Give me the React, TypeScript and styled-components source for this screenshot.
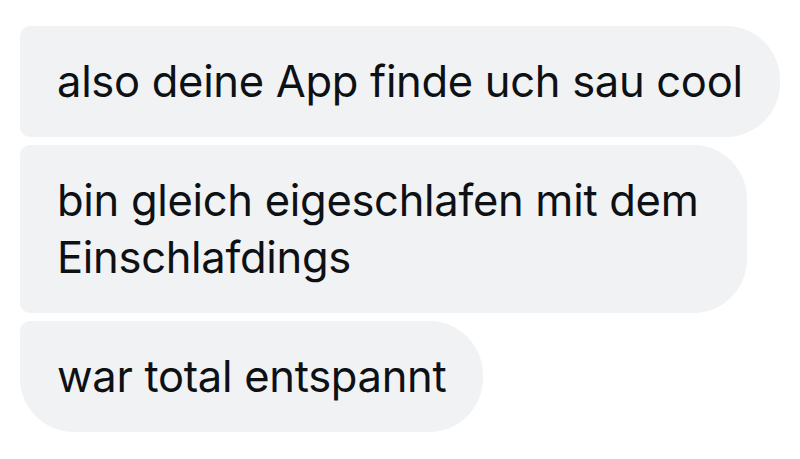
import React from 'react';
import styled, { createGlobalStyle } from 'styled-components';

const GlobalStyle = createGlobalStyle`
  html, body {
    margin: 0;
    padding: 0;
    background: #ffffff;
  }
  body {
    font-family: Inter, "Noto Sans", "Liberation Sans", sans-serif;
    -webkit-font-smoothing: antialiased;
  }
`;

type Position = 'first' | 'middle' | 'last';

const Thread = styled.div`
  display: flex;
  flex-direction: column;
  align-items: flex-start;
  gap: 8px;
  padding: 26px 20px 0 20px;
`;

const Bubble = styled.div<{ $position: Position; $wrapped?: boolean }>`
  box-sizing: border-box;
  width: ${(p) => (p.$wrapped ? '727px' : 'auto')};
  padding: 27px 37px;
  background: #f1f2f4;
  color: #0e1114;
  font-size: 43.5px;
  line-height: 57px;
  letter-spacing: -0.3px;
  white-space: pre;
  border-radius: 10px 54px 54px 10px;
  border-bottom-left-radius: ${(p) => (p.$position === 'last' ? '54px' : '10px')};
`;

const messages: { id: number; text: string }[] = [
  { id: 1, text: 'also deine App finde uch sau cool' },
  { id: 2, text: 'bin gleich eigeschlafen mit dem\nEinschlafdings' },
  { id: 3, text: 'war total entspannt' },
];

const App: React.FC = () => {
  return (
    <>
      <GlobalStyle />
      <Thread>
        {messages.map((msg, i) => (
          <Bubble
            key={msg.id}
            $wrapped={msg.text.includes('\n')}
            $position={i === 0 ? 'first' : i === messages.length - 1 ? 'last' : 'middle'}
          >
            {msg.text}
          </Bubble>
        ))}
      </Thread>
    </>
  );
};

export default App;
